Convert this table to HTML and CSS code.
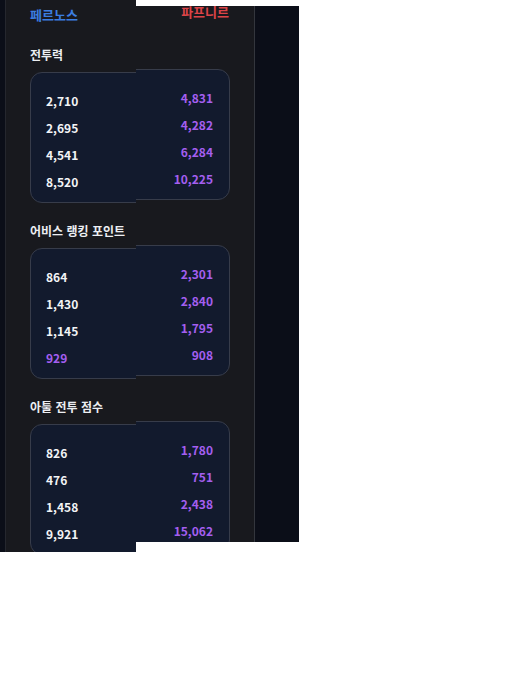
FILE: index.html
```html
<!DOCTYPE html>
<html lang="ko">
<head>
<meta charset="utf-8">
<title>비교</title>
<link rel="stylesheet" href="styles.css">
</head>
<body>
<div class="stage">
  <div class="clip clip-left">
    <div class="screen">
      <div class="panel">
        <div class="header"><span class="side-a">페르노스</span></div>
        <section class="section">
          <h3 class="title">전투력</h3>
          <div class="card">
            <div class="row"><span class="val">2,710</span></div>
            <div class="row"><span class="val">2,695</span></div>
            <div class="row"><span class="val">4,541</span></div>
            <div class="row"><span class="val">8,520</span></div>
          </div>
        </section>
        <section class="section">
          <h3 class="title">어비스 랭킹 포인트</h3>
          <div class="card">
            <div class="row"><span class="val">864</span></div>
            <div class="row"><span class="val">1,430</span></div>
            <div class="row"><span class="val">1,145</span></div>
            <div class="row"><span class="val hi">929</span></div>
          </div>
        </section>
        <section class="section">
          <h3 class="title">아툴 전투 점수</h3>
          <div class="card">
            <div class="row"><span class="val">826</span></div>
            <div class="row"><span class="val">476</span></div>
            <div class="row"><span class="val">1,458</span></div>
            <div class="row"><span class="val">9,921</span></div>
          </div>
        </section>
      </div>
    </div>
  </div>
  <div class="clip clip-right">
    <div class="screen shifted">
      <div class="panel">
        <div class="header end"><span class="side-b">파프니르</span></div>
        <section class="section">
          <div class="title-space"></div>
          <div class="card">
            <div class="row end"><span class="val hi">4,831</span></div>
            <div class="row end"><span class="val hi">4,282</span></div>
            <div class="row end"><span class="val hi">6,284</span></div>
            <div class="row end"><span class="val hi">10,225</span></div>
          </div>
        </section>
        <section class="section">
          <div class="title-space"></div>
          <div class="card">
            <div class="row end"><span class="val hi">2,301</span></div>
            <div class="row end"><span class="val hi">2,840</span></div>
            <div class="row end"><span class="val hi">1,795</span></div>
            <div class="row end"><span class="val hi">908</span></div>
          </div>
        </section>
        <section class="section">
          <div class="title-space"></div>
          <div class="card">
            <div class="row end"><span class="val hi">1,780</span></div>
            <div class="row end"><span class="val hi">751</span></div>
            <div class="row end"><span class="val hi">2,438</span></div>
            <div class="row end"><span class="val hi">15,062</span></div>
          </div>
        </section>
      </div>
    </div>
  </div>
</div>
</body>
</html>
```
FILE: styles.css
```css
* { box-sizing: border-box; }
html, body {
  margin: 0;
  padding: 0;
  background: #ffffff;
  font-family: "Noto Sans CJK KR", "Noto Sans", sans-serif;
}
.stage {
  display: flex;
  align-items: flex-start;
}
.clip {
  overflow: hidden;
}
.clip-left {
  width: 136px;
  height: 552px;
}
.clip-right {
  width: 163px;
  height: 536px;
  margin-top: 6px;
}
.screen {
  width: 299px;
  height: 700px;
  background: #0b0e18;
  padding-left: 5px;
}
.shifted {
  margin-left: -136px;
  margin-top: -9px;
}
.panel {
  width: 250px;
  height: 100%;
  background: #18191e;
  border-left: 1px solid #25272e;
  border-right: 1px solid #33363d;
  padding: 8px 24px 0;
}
.header {
  display: flex;
  justify-content: flex-start;
  font-size: 13px;
  font-weight: 700;
  line-height: 13px;
  height: 13px;
}
.header.end {
  justify-content: flex-end;
  padding-right: 1px;
}
.side-a { color: #3b7de0; }
.side-b { color: #dc4448; }
.section {
  margin-top: 26px;
}
.section + .section {
  margin-top: 20px;
}
.title,
.title-space {
  margin: 0 0 9px;
  height: 16px;
  font-size: 12px;
  font-weight: 700;
  line-height: 16px;
  color: #eceef2;
}
.card {
  height: 131px;
  border: 1px solid #373c4a;
  border-radius: 12px;
  background: #121a2d;
  padding: 14px 16px 7px 15px;
}
.row {
  display: flex;
  justify-content: flex-start;
  align-items: center;
  height: 27px;
}
.row.end {
  justify-content: flex-end;
}
.val {
  font-size: 12px;
  font-weight: 700;
  color: #f3f4f6;
}
.val.hi {
  color: #a45ff0;
}
```
